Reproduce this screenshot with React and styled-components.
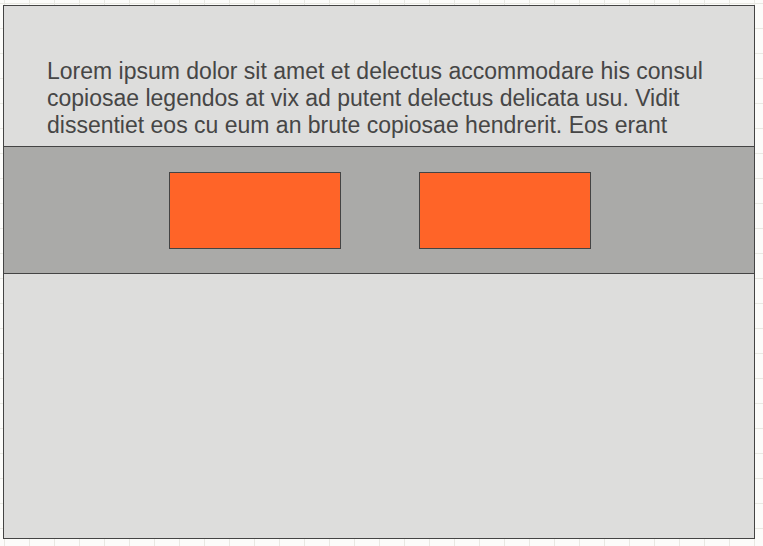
import React from "react";
import styled, { createGlobalStyle } from "styled-components";

const Global = createGlobalStyle`
  html, body { margin: 0; padding: 0; }
  body {
    background-color: #fcfcfa;
    background-image:
      linear-gradient(to right, #e9e9e3 1px, transparent 1px),
      linear-gradient(to bottom, #e9e9e3 1px, transparent 1px);
    background-size: 25px 25px;
    background-position: 4px 3px;
    min-height: 546px;
    font-family: "Liberation Sans", Arial, sans-serif;
  }
`;

const Page = styled.div`
  padding: 5px 0 0 3px;
`;

const Frame = styled.div`
  box-sizing: border-box;
  width: 752px;
  height: 534px;
  border: 1px solid #444;
  background: #dddddc;
  display: flex;
  flex-direction: column;
`;

const Intro = styled.div`
  box-sizing: border-box;
  height: 140px;
  padding: 52px 44px 0 43px;
  overflow: hidden;
`;

const Text = styled.p`
  margin: 0;
  font-size: 23px;
  line-height: 27px;
  color: #464646;
`;

const Band = styled.div`
  box-sizing: border-box;
  height: 128px;
  background: #aaaaa8;
  border-top: 1px solid #444;
  border-bottom: 1px solid #444;
  display: flex;
  align-items: center;
  justify-content: center;
  gap: 78px;
  padding-left: 2px;
  padding-top: 1px;
`;

const Button = styled.button`
  box-sizing: border-box;
  width: 172px;
  height: 77px;
  background: #ff6428;
  border: 1px solid #444;
  padding: 0;
  margin: 0;
  cursor: pointer;
`;

export default function App() {
  return (
    <>
      <Global />
      <Page>
        <Frame>
          <Intro>
            <Text>
              Lorem ipsum dolor sit amet et delectus accommodare his consul
              copiosae legendos at vix ad putent delectus delicata usu. Vidit
              dissentiet eos cu eum an brute copiosae hendrerit. Eos erant
            </Text>
          </Intro>
          <Band>
            <Button aria-label="first" />
            <Button aria-label="second" />
          </Band>
        </Frame>
      </Page>
    </>
  );
}
